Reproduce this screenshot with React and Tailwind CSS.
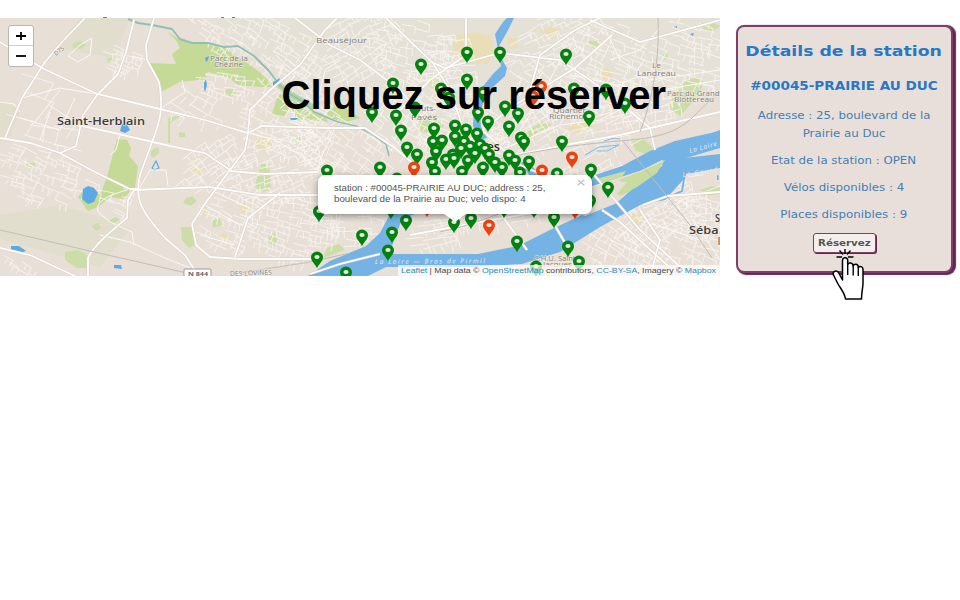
import React from "react";

const GREEN_PINS = [
  [421, 65], [467, 53], [500, 53], [566, 55], [467, 80], [393, 84], [441, 89], [415, 108], [449, 98],
  [483, 93], [574, 89], [606, 90], [625, 104], [372, 113], [396, 116], [505, 107], [518, 114], [478, 113],
  [589, 117], [488, 122], [509, 127], [401, 131], [434, 129], [455, 126], [466, 130], [477, 134],
  [455, 137], [442, 141], [433, 142], [521, 138], [524, 142], [562, 142], [407, 148],
  [464, 142], [480, 145], [470, 147], [436, 152], [461, 149], [417, 155], [453, 155], [475, 154], [485, 149],
  [489, 155], [509, 156], [446, 160], [432, 163], [454, 159], [468, 161], [515, 161], [529, 162],
  [495, 163], [483, 168], [502, 168], [327, 171], [380, 168], [462, 172], [435, 172], [520, 173],
  [557, 174], [591, 170], [397, 179], [608, 188], [590, 201], [319, 212], [391, 209], [406, 221],
  [454, 223], [471, 219], [504, 208], [534, 208], [554, 218], [362, 236], [392, 233], [388, 251],
  [317, 258], [346, 273], [517, 242], [568, 247], [579, 262], [536, 267],
];
const RED_PINS = [[541, 87], [533, 97], [572, 158], [414, 168], [542, 171], [427, 207], [575, 209], [489, 226]];

// cx, cy, half width, half height, angle, spacing
const BLOCKS = [
  [118, 55, 16, 18, 20, 5], [35, 170, 42, 30, 22, 6], [18, 265, 18, 10, 30, 5],
  [30, 85, 38, 22, 25, 15], [45, 120, 40, 22, 15, 13], [185, 100, 28, 25, 30, 9], [220, 82, 26, 14, 10, 5],
  [210, 34, 30, 14, 35, 5], [205, 168, 35, 26, -35, 6], [225, 215, 30, 34, 25, 6], [270, 40, 50, 26, 30, 6],
  [350, 50, 44, 34, -30, 6], [290, 85, 40, 26, 40, 6], [270, 125, 44, 26, 20, 6], [275, 170, 50, 36, -20, 6],
  [285, 225, 45, 34, 15, 6], [335, 145, 50, 32, 35, 6], [345, 215, 35, 30, 5, 6], [405, 50, 44, 30, 15, 6],
  [400, 110, 40, 40, 40, 6], [445, 70, 28, 42, -10, 7], [455, 130, 46, 36, 20, 5], [545, 45, 44, 26, -25, 6],
  [600, 60, 45, 40, 20, 6], [550, 90, 46, 30, 35, 7], [635, 100, 42, 30, -15, 7], [685, 55, 36, 36, 15, 7],
  [520, 130, 40, 24, -25, 6], [600, 135, 40, 22, -20, 8], [570, 190, 60, 18, -20, 6], [500, 205, 80, 22, -15, 7],
  [650, 215, 42, 30, -32, 5], [690, 235, 40, 40, 20, 6], [620, 252, 48, 24, 30, 6], [695, 200, 30, 22, -12, 7],
  [430, 237, 40, 12, -10, 8], [490, 272, 70, 8, 5, 7], [85, 188, 28, 10, 15, 7], [118, 203, 10, 14, 20, 5],
];

function rng(seed) {
  let s = seed;
  return () => {
    s = (s * 16807) % 2147483647;
    return s / 2147483647;
  };
}

function blockPath([, , w, h, , gap], index) {
  const r = rng(index * 977 + 31);
  let d = "";
  for (let y = -h; y <= h; y += gap) {
    for (let x = -w; x < w; x += gap * 2) {
      if ((x / w) ** 2 + (y / h) ** 2 > 1.05 || r() < 0.22) continue;
      const j = () => (r() - 0.5) * gap * 0.7;
      d += `M${(x + j()).toFixed(1)} ${(y + j()).toFixed(1)}l${(gap * 2.2).toFixed(1)} ${j().toFixed(1)}`;
      if (r() < 0.85) d += `l${j().toFixed(1)} ${(gap * 1.2).toFixed(1)}`;
      if (r() < 0.5) d += `m${(-gap).toFixed(1)} ${j().toFixed(1)}l${j().toFixed(1)} ${(-gap).toFixed(1)}`;
    }
  }
  return d;
}

const GREENS = [
  "M166 31l10 6 14 6 16 1 16 2 14 10 14 9 16 12 8 10-14 0-22-2-10-8-20-5-8 6-8-14-16 0-4-10 8-6-4-8z",
  "M149 63l26 1 7-7 6-12 6 2-8 14 14 5 8 13-28 3-17 9z",
  "M117 139l10 1 4 8-2 8 9 10-3 22-13 11-12-2-12 10-10 4-10-14 7-8 16 4 6-16z",
  "M278 94l14 2 10 12 22 6 4 8-18-2-12 0-8-12-6 8-12-2z",
  "M330 106l16 2 14 10-14 4-20-4z",
];
const LIGHT_GREENS = [
  "M65 252l13-2 10 6-1 12-10 0-12-8z", "M181 227l10 0 4 18-6 3-7-8z", "M186 198l6-2 5 5-6 5-8-3z",
  "M92 226l6-3 3 5-5 3z", "M108 221l8-4 4 3-8 4z", "M257 178l4-14 8 0 2 24-7 4-9-3z", "M269 236l6-4 3 10-4 4-6-4z",
  "M73 44l8-3 5 4-6 4-7-1z", "M107 59l5-2 1 4-5 2z", "M522 133l20-11 10 3-12 8-16 7z", "M588 41l8 0 4 5-6 3z",
  "M700 24l12-2 8 4-8 6-8-2z", "M672 96l12-14 12-5 8 5-6 14-18 20-10-8z", "M700 190l12-4 8 2 0 6-16 2z",
  "M223 91l8-3 6 4-6 5z", "M418 116l18-2 8 12-10 8-14-2z", "M345 250l-22 8 4-10 12-4z", "M662 55l5-2 1 5-4 2z",
  "M179 132l6 1 0 4-6 0z", "M151 151l7-4 1 6-6 5-2-2z", "M24 165l10-3 2 5-9 0z", "M293 138l6-2 2 5-5 2z",
  "M632 142l10-4 12 10-8 6-10-3z", "M212 220l8-1 2 6-9 3z", "M168 118l14-3-6 4-6 4 0 20-2 0z",
];
const OCHRES = [
  "M453 36l22-4 16 4 4 18-8 10-24 0-10-10z", "M508 38l8 0 2 10-9 1z", "M600 70l8-2 6 8-10 4z", "M256 138l10-2 7 8-8 7-9-4z",
  "M630 215l10-4 6 8-10 6z", "M195 164l8 4-4 8-8-4z", "M540 30l14-4 6 6-12 8z", "M565 128l18-8 12 5-15 10z",
  "M238 206l8-4 6 6-8 6z", "M218 236l7-3 4 6-8 4z", "M200 210l5-4 3 5-4 5z", "M430 75l10 2-2 10-10 4z",
];

const ROADS = [
  "M0 42L42 68 97 94 160 109 205 120 248 133 262 126 330 128 365 128 395 148 415 165",
  "M85 18L62 42 45 62 22 98 5 138", "M134 20L126 52 118 74 97 95 83 115 76 146 60 153",
  "M154 18L146 45 147 60 159 82C164 108 160 122 151 145L140 175C134 200 142 212 165 238L185 255 196 272",
  "M0 138L30 143 60 153 95 172 130 189 139 189", "M77 125L110 132 170 146 205 153 230 170",
  "M248 133L245 150 230 170 204 205 192 224 196 245 210 257 240 259 318 259",
  "M88 276L88 258C94 245 110 232 127 218L128 200 134 190 210 187 260 195 318 195",
  "M248 133L250 110 270 90 300 65 325 30 337 18", "M230 171L265 174 318 172", "M235 257L248 218 280 193",
  "M0 248L30 255 75 276", "M295 18L330 45 360 60 400 90 425 120", "M386 18L432 62 450 90 462 125",
  "M432 62L445 68 500 53 560 60 590 80 625 107 650 128 655 150", "M530 90L540 55 575 30 600 18",
  "M515 155L560 146 620 135 720 112", "M466 18L466 55 430 80 400 110", "M482 130L520 165 560 182",
  "M470 140L515 105 575 68 612 35", "M590 20L640 42 720 20", "M590 170L600 182 640 230 690 276",
  "M640 210L660 240 650 276", "M602 210L620 222 668 266", "M643 205L668 196 720 192",
  "M380 254L340 264 310 274", "M410 235L480 222 550 210", "M500 213L527 250", "M550 217L572 255",
];
const LANES = [
  "M97 94L60 88 22 98", "M0 102L14 104 20 112", "M50 112L40 140M60 90L35 122M20 118L60 130M75 98L60 130",
  "M147 60L132 56M160 109L185 92 182 80", "M130 189C110 195 95 200 98 212L110 222 132 232 134 245M100 235L130 242 165 258 190 268",
  "M139 189L150 170 166 170 168 186", "M110 155L116 150 120 134", "M248 133L275 140 300 155 318 172",
  "M318 100L325 70 340 60", "M335 128L320 160 318 172", "M560 60L540 100 520 130", "M600 18L620 60 650 80 720 70",
  "M570 75L650 92 720 80", "M625 107L600 120 560 125 500 150", "M660 28L640 50 610 60", "M80 45L92 38 90 55 78 62 68 56z",
  "M205 205L240 225M215 192L250 208M200 235L235 245", "M690 215L720 260M610 240L660 262M640 220L700 240",
];

function Pin({ x, y, fill }) {
  return (
    <g transform={`translate(${x} ${y})`}>
      <path d="M0 10.5C-1 6.5-6-3.600-6-.8A6 5.700 0 0 1 6-.8C6 3.600 1 6.500 0 10.500Z" fill="none" />
      <path d="M0 10.500C-1 6.500-6 3.600-6-.8A6 5.700 0 0 1 6-.8C6 3.600 1 6.500 0 10.500Z" fill={fill} />
      <ellipse cx="0" cy="-1" rx="2.6" ry="2.1" fill="#e9eae0" />
    </g>
  );
}

function Label({ x, y, w, size = 7.5, fill = "#85817c", bold, children, rotate = 0 }) {
  return (
    <text
      x={x} y={y} textLength={w} lengthAdjust="spacingAndGlyphs" fontSize={size} fill={fill}
      fontWeight={bold ? 600 : 400} transform={`rotate(${rotate} ${x} ${y})`}
      stroke="#f3eee8" strokeWidth="1.4" strokeOpacity="0.7" paintOrder="stroke"
    >
      {children}
    </text>
  );
}

function MapCanvas() {
  return (
    <svg viewBox="0 18 720 258" className="block h-[258px] w-[720px] font-['Open_Sans','Noto_Sans',sans-serif]">
      <rect y="18" width="720" height="258" fill="#e8dfd7" />
      <path d="M0 100l12 4 8 8-10 24-10 6zM0 215l60-10 40 12 30 12-30 38-100-28zM80 18l50 0-15 40-60-10z" fill="#e2dece" />
      <path d="M200 18L720 18 720 90 640 100 560 90 470 120 400 145 300 100 240 40z" fill="#e6e1d7" />
      <g fill="#c6da98">{GREENS.map((d) => <path key={d} d={d} />)}</g>
      <g fill="#c8dda0" fillOpacity="0.85">{LIGHT_GREENS.map((d) => <path key={d} d={d} />)}</g>
      <g fill="#ebdcae" fillOpacity="0.75">{OCHRES.map((d) => <path key={d} d={d} />)}</g>
      <g fill="none" stroke="#f8f5f0" strokeWidth="1" strokeOpacity="0.85">
        {BLOCKS.map((b, i) => (
          <path key={i} d={blockPath(b, i)} transform={`translate(${b[0]} ${b[1]}) rotate(${b[4]})`} />
        ))}
      </g>
      <g fill="none" stroke="#8fc0b5" strokeWidth="2" strokeLinejoin="round">
        <path d="M128 19l10 4 14 2 20 4 8 10 12 4 16 0 16 4 14-1 16 10 14 14 8 10" />
        <path d="M276 82l14 12 14 8 10 6" stroke="#b5d3a2" strokeWidth="6" />
        <path d="M276 82l14 12 14 8 10 10 24 10 18 4 16 8 14 10 3 12" strokeWidth="1.6" />
      </g>
      <g fill="#5da9e2">
        <path d="M83 189l5-3 6 2 4 5-4 9-6 2-6-5z" />
        <path d="M120 131l2-7 4-1 4 7-5 3z" />
        <path d="M11 246l8 0 7 5-6 2-9-3zM114 265l7 0 1 4-8-1zM204 83l2-4 1 6-2 7-1-3z" />
        <path d="M273 82l7-4-2 7-5 2zM290 118l8 0-2 2-5 0zM205 58l4-2-1 4-2 2zM674 27l3-1 0 2zM690 34l4-1-1 3z" />
        <path d="M152 168l4-7 3 7-5 2z" fill="none" stroke="#5da9e2" strokeWidth="1.2" />
      </g>
      <g fill="#74b3e4">
        <path d="M507 18l7 0-7 14-8 14 1 10 7 12-2 8-12 11-9 12-4 16 1 12 6 11-6 2-8-14 1-18 6-18 13-16 8-8-4-22-2-10 8-12z" />
        <path d="M720 131L675 141 650 151 622 166 592 176 570 182 545 178 525 160 521 163 535 184 480 198 410 205 390 214 380 233 366 246 330 261 308 276 368 276 386 267 470 267 522 264 560 252 600 227 642 204 665 200 683 180 686 174 720 168 720 154 684 158 665 164 640 182 620 200 582 215 552 229 518 246 478 254 389 254 402 219 415 214 530 198 592 186 640 171 662 160 690 151 720 146z" />
        <path d="M720 130v18l-34 10-24 8 2-14zM640 186l45-24 0 16-20 8-22 18-20 4z" />
      </g>
      <path d="M592 187L640 171 665 160 656 172 632 186 617 203 585 216 560 208z" fill="#e7dfd6" />
      <path d="M618 180l22-8 24-11-7 12-20 14-16 9-4-2 10-12-4 0z" fill="#c9dca0" />
      <path d="M596 179l30-8-4 6-20 6z" fill="#c9dca0" />
      <path d="M642 203l22-4 18-8 3-18" fill="none" stroke="#74b3e4" strokeWidth="1.8" />
      <path d="M585 155l14-8 20-2-12 6-10 0" fill="none" stroke="#8cc0e6" strokeWidth="1.2" />
      <path d="M604 141l10-3 6 1" fill="none" stroke="#8cc0e6" strokeWidth="1.2" />
      <g fill="none" stroke="#fbf9f6" strokeWidth="1">{LANES.map((d) => <path key={d} d={d} />)}</g>
      <g fill="none" stroke="#d8d0c8" strokeWidth="2.8">{ROADS.map((d) => <path key={d} d={d} />)}</g>
      <g fill="none" stroke="#fffdfb" strokeWidth="1.8">{ROADS.map((d) => <path key={d} d={d} />)}</g>
      <g fill="none" stroke="#c3bdb7" strokeWidth="1">
        <path d="M0 230L90 251 200 276" />
        <path d="M240 273L310 262 350 253" />
        <path d="M622 140L650 175 690 225 712 258M640 132C652 100 660 60 658 18" />
        <path d="M480 163C540 150 570 145 630 140S690 115 720 92" />
        <path d="M440 232C490 222 520 200 580 190" />
      </g>

      <Label x={57} y={125} w={88} size={11} fill="#3f3d3b" bold>Saint-Herblain</Label>
      <Label x={316} y={43} w={51}>Beauséjour</Label>
      <Label x={210} y={61} w={38}>Parc de la</Label>
      <Label x={214} y={67} w={29}>Chézine</Label>
      <Label x={410} y={111} w={26}>Hauts-</Label>
      <Label x={411} y={120} w={26}>Pavés</Label>
      <Label x={652} y={68} w={9}>Le</Label>
      <Label x={637} y={76} w={39}>Landreau</Label>
      <Label x={667} y={96} w={52.500}>Parc du Grand</Label>
      <Label x={674} y={102} w={40}>Blottereau</Label>
      <Label x={553} y={113} w={33}>Quartier</Label>
      <Label x={549} y={119} w={43}>Richemont</Label>
      <Label x={456} y={151} w={44} size={12} fill="#2f2d2b" bold>Nantes</Label>
      <Label x={715} y={221.500} w={5} size={10} fill="#3f3d3b" bold>S</Label>
      <Label x={689} y={234} w={29.500} size={11} fill="#3f3d3b" bold>Séba</Label>
      <Label x={718} y={245} w={2} size={10} fill="#3f3d3b" bold>l</Label>
      <Label x={716} y={180} w={3.500}>i</Label>
      <Label x={534} y={261} w={44}>C.H.U. Saint-</Label>
      <Label x={543} y={267} w={29} size={7}>Jacques</Label>
      <Label x={230} y={276} w={42} size={6.500} rotate={-2}>DES LOVINES</Label>
      <Label x={56} y={56} w={11} size={6} rotate={-38}>D75</Label>
      <g fill="#e4f1fb" fontSize="6.5" fontStyle="italic">
        <text x="375" y="264" textLength="110" transform="rotate(-.5 375 264)">La Loire — Bras de Pirmil</text>
        <text x="690" y="153" textLength="28" transform="rotate(-15 690 153)">La Loire</text>
        <text x="683" y="177" textLength="35" transform="rotate(-9 683 177)">Le Gourd</text>
      </g>
      <rect x="184" y="269" width="27" height="9" rx="1" fill="#fff" stroke="#8a8784" strokeWidth="0.8" />
      <text x="188" y="275.500" textLength="20" lengthAdjust="spacingAndGlyphs" fontSize="6" fontWeight="700" fill="#666">N 844</text>

      {GREEN_PINS.map(([x, y]) => <Pin key={`${x}-${y}`} x={x} y={y} fill="#038210" />)}
      {RED_PINS.map(([x, y]) => <Pin key={`${x}-${y}`} x={x} y={y} fill="#ec4210" />)}
    </svg>
  );
}

function ZoomControl() {
  return (
    <div className="absolute left-[8px] top-[7px] flex h-[42px] w-[26px] flex-col rounded-[3px] border border-[#b9b5af] bg-white text-black">
      <button className="flex h-5 items-center justify-center border-b border-[#ccc]" aria-label="Zoom avant">
        <svg viewBox="0 0 10 10" className="size-[10px]"><path d="M0 5h10M5 1v8" stroke="currentColor" strokeWidth="1.8" /></svg>
      </button>
      <button className="flex h-5 items-center justify-center" aria-label="Zoom arrière">
        <svg viewBox="0 0 10 10" className="size-[10px]"><path d="M0 5h10" stroke="currentColor" strokeWidth="1.8" /></svg>
      </button>
    </div>
  );
}

function Popup() {
  return (
    <div className="absolute left-[317.5px] top-[157px] w-[274px]">
      <div className="h-[39px] rounded-[7px] bg-white pl-[16px] pt-[8px] text-[9px] leading-[11px] text-[#555] shadow-[0_2px_7px_rgba(0,0,0,0.4)]">
        <p className="w-max origin-left scale-x-[1.075]">station : #00045-PRAIRIE AU DUC; address : 25,</p>
        <p className="w-max origin-left scale-x-[1.085]">boulevard de la Prairie au Duc; velo dispo: 4</p>
      </div>
      <svg viewBox="0 0 24 10" className="absolute left-[125px] top-[38px] h-[10px] w-[24px]"><path d="M0 0h24L12 9Z" fill="#fff" /></svg>
      <svg viewBox="0 0 8 7" className="absolute right-[7px] top-[4px] h-[7px] w-[8px]"><path d="M.7.7l6.6 5.6M7.3.7L.7 6.3" stroke="#c0c0c0" strokeWidth="1.2" /></svg>
    </div>
  );
}

function Attribution() {
  return (
    <div className="absolute bottom-0 right-0 flex h-[11px] w-[322px] items-center bg-white/70 text-[8px] leading-none text-[#4a4a4a]">
      <p className="ml-[2.5px] w-max origin-left scale-x-[1.09] whitespace-nowrap">
        <span className="text-[#2b8cb8]">Leaflet</span> | Map data © <span className="text-[#2b8cb8]">OpenStreetMap</span> contributors,{" "}
        <span className="text-[#2b8cb8]">CC-BY-SA</span>, Imagery © <span className="text-[#2b8cb8]">Mapbox</span>
      </p>
    </div>
  );
}

function HandCursor() {
  return (
    <svg viewBox="0 0 32 52" className="absolute left-[832px] top-[248px] h-[52px] w-[32px]" fill="none" stroke="#000">
      <path d="M10.500 32V12.500C10.500 8.800 15.700 8.800 15.700 12.500V16.500C16.500 14.200 21 14.500 21.200 18 22.500 15 26.300 15.800 26.300 19.500 28 17.500 31 18.500 31 21.500V35C31 40 29.500 43 29.500 51H13.500C12.500 44 8 40 5.500 35L1.500 27C.2 23.500 4 21.500 6.500 24.500L10.500 32Z" fill="#fff" strokeWidth="1.5" strokeLinejoin="round" />
      <path d="M15.700 16v11M21.200 17.500v10M26.300 19v9" strokeWidth="1.4" />
      <path d="M13 1v5M7.500 2.500l3.500 4M18.500 2.500l-3.500 4M4.500 9h5.500M16 9h5.500" strokeWidth="1.4" />
    </svg>
  );
}

function StationPanel() {
  return (
    <aside className="mt-[24.5px] flex h-[248px] w-[217px] flex-col items-center rounded-[8px] border-2 border-[#7e4068] bg-[#e8dfda] font-['DejaVu_Sans',sans-serif] text-[10px] leading-[18px] text-[#437fb3] shadow-[2px_1px_1px_1px_#62264f]">
      <h2 className="mt-[15.5px] origin-center scale-x-[1.235] whitespace-nowrap text-[14px] font-bold text-[#2878c3]">Détails de la station</h2>
      <h3 className="mt-[17px] origin-center scale-x-[1.13] whitespace-nowrap text-[12px] font-bold text-[#2878c3]">#00045-PRAIRIE AU DUC</h3>
      <p className="mt-[12px] scale-x-[1.18] whitespace-nowrap text-center">Adresse : 25, boulevard de la<br />Prairie au Duc</p>
      <p className="mt-[9px] scale-x-[1.18] whitespace-nowrap">Etat de la station : OPEN</p>
      <p className="mt-[9px] scale-x-[1.18] whitespace-nowrap">Vélos disponibles : 4</p>
      <p className="mt-[9px] scale-x-[1.18] whitespace-nowrap">Places disponibles : 9</p>
      <button className="mt-[9px] flex h-[20px] w-[63px] items-center justify-center rounded-[3px] border border-[#7e4068] bg-[#f4efed] text-[#555] shadow-[1px_1px_0_0_#62264f]">
        <span className="scale-x-[1.08] text-[9.5px] font-bold leading-none">Réservez</span>
      </button>
    </aside>
  );
}

export default function App() {
  return (
    <div className="relative flex h-[600px] w-[960px] items-start gap-[15.5px] overflow-hidden bg-white font-['Liberation_Sans',Arial,sans-serif]">
      <main className="w-[720px] shrink-0">
        <div className="flex h-[18px] items-end overflow-hidden">
          <div className="ml-[103px] h-px w-[4px] bg-[#6b73cc]" />
          <div className="ml-[114px] h-px w-[3px] bg-[#6b73cc]" />
          <div className="ml-[8px] h-px w-[3px] bg-[#6b73cc]" />
        </div>
        <section className="relative h-[258px] overflow-hidden">
          <MapCanvas />
          <ZoomControl />
          <Popup />
          <Attribution />
          <h1 className="absolute left-[281.5px] top-[54px] whitespace-nowrap text-[40px] font-bold leading-[46px] text-black">Cliquez sur réserver</h1>
        </section>
      </main>
      <StationPanel />
      <HandCursor />
    </div>
  );
}
